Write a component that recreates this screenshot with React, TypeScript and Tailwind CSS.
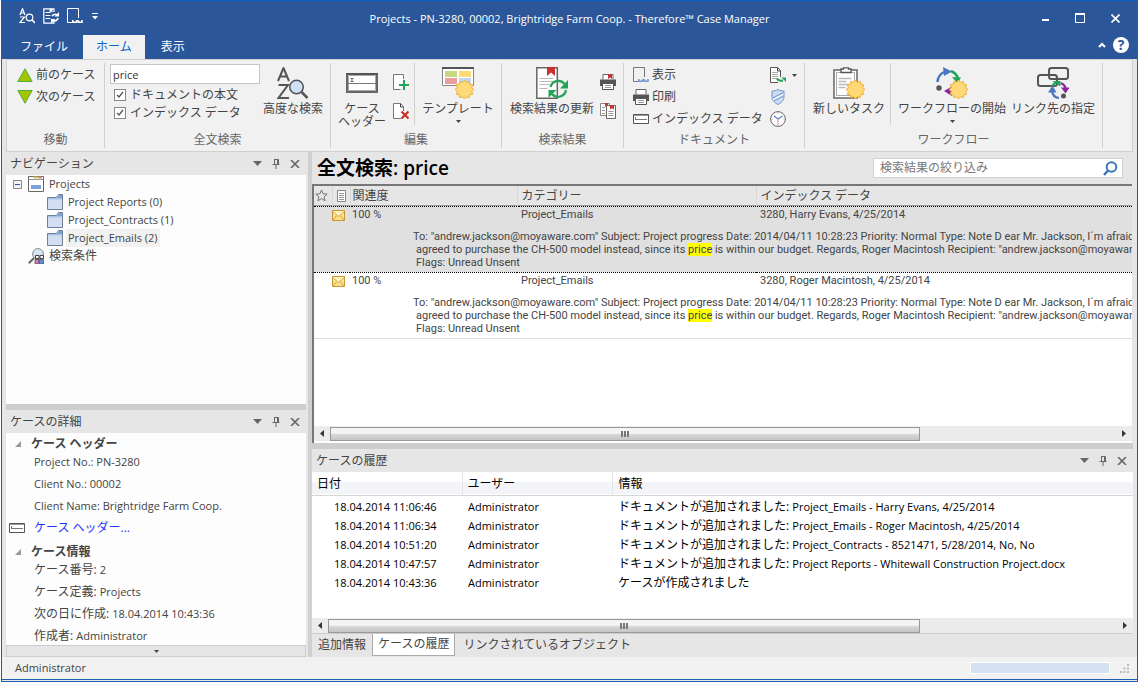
import type { ReactNode } from "react"

const treeItems = [
  { label: "Project Reports (0)", selected: false },
  { label: "Project_Contracts (1)", selected: false },
  { label: "Project_Emails (2)", selected: true },
]

const results = [
  { relevance: "100 %", category: "Project_Emails", index: "3280, Harry Evans, 4/25/2014", selected: true },
  { relevance: "100 %", category: "Project_Emails", index: "3280, Roger Macintosh, 4/25/2014", selected: false },
]

const history = [
  { date: "18.04.2014 11:06:46", user: "Administrator", info: "ドキュメントが追加されました: ", detail: "Project_Emails - Harry Evans, 4/25/2014" },
  { date: "18.04.2014 11:06:34", user: "Administrator", info: "ドキュメントが追加されました: ", detail: "Project_Emails - Roger Macintosh, 4/25/2014" },
  { date: "18.04.2014 10:51:20", user: "Administrator", info: "ドキュメントが追加されました: ", detail: "Project_Contracts - 8521471, 5/28/2014, No, No" },
  { date: "18.04.2014 10:47:57", user: "Administrator", info: "ドキュメントが追加されました: ", detail: "Project Reports - Whitewall Construction Project.docx" },
  { date: "18.04.2014 10:43:36", user: "Administrator", info: "ケースが作成されました", detail: "" },
]

const caseInfo = [
  { label: "ケース番号: ", value: "2" },
  { label: "ケース定義: ", value: "Projects" },
  { label: "次の日に作成: ", value: "18.04.2014 10:43:36" },
  { label: "作成者: ", value: "Administrator" },
]

const sunPoints = Array.from({ length: 24 }, (_, i) => {
  const r = i % 2 ? 7.4 : 9.4
  const a = (i * Math.PI) / 12
  return `${(Math.cos(a) * r).toFixed(2)},${(Math.sin(a) * r).toFixed(2)}`
}).join(" ")

function Sun({ x, y }: { x: number; y: number }) {
  return <polygon points={sunPoints} transform={`translate(${x} ${y})`} fill="#ffd978" stroke="#f0b030" strokeWidth="1" />
}

/* ---------- small icons ---------- */

function CaretDown({ className = "" }: { className?: string }) {
  return (
    <svg width="5" height="3" viewBox="0 0 5 3" className={className}>
      <path d="M0 0h5L2.5 3z" fill="#444" />
    </svg>
  )
}

function FindSmallIcon() {
  return (
    <svg width="16" height="16" viewBox="0 0 16 16" fill="none" stroke="#fff" strokeWidth="1.2">
      <path d="M1 7L3.500 .8L6 7M2 5h3M1 9h4.500L1 14.500h5" />
      <circle cx="10.500" cy="9.500" r="3.300" />
      <path d="M13 12l3 3" strokeWidth="1.600" />
    </svg>
  )
}

function RefreshSmallIcon() {
  return (
    <svg width="16" height="16" viewBox="0 0 16 16" fill="none" stroke="#fff" strokeWidth="1.200">
      <path d="M11 4V.8H.8v14.400H11V13" />
      <path d="M2.500 4.500h5M2.500 7.500h5M2.500 10.500h5" />
      <path d="M6.500 .8h3v4L8 3.600 6.500 4.800z" fill="#fff" stroke="none" />
      <path d="M9 8a3.500 3.500 0 0 1 5-1M15 10a3.500 3.500 0 0 1-5 2.500" strokeWidth="1.600" />
      <path d="M16 4v4.500h-4.500zM8 15.500V11h4.500z" fill="#fff" stroke="none" />
    </svg>
  )
}

function ViewDocIcon({ stroke = "#777", accent = "#7797cc" }: { stroke?: string; accent?: string }) {
  return (
    <svg width="16" height="16" viewBox="0 0 16 16" fill="none">
      <path d="M11.500 10V.5H.5v14H6" stroke={stroke} />
      <path d="M5.800 12v2.200h3.700V12.500M11.500 12.500v1.700H15V12M9.500 12.800h2" stroke={accent} strokeWidth="1.600" />
    </svg>
  )
}

function PrinterIcon({ mark = false }: { mark?: boolean }) {
  return (
    <svg width="16" height="16" viewBox="0 0 16 16">
      <path d="M3 5.500V.5h10v5" fill="#fff" stroke="#666" />
      <path d="M0 5.500h16V12H0z" fill="#555" />
      <path d="M2.500 9.500h11v6h-11z" fill="#fff" stroke="#555" />
      <path d="M5 11.500h6M5 13.500h6" stroke="#999" />
      {mark && <path d="M8 0h4v5l-2-1.500L8 5z" fill="#c83232" />}
    </svg>
  )
}

function HeaderFormIcon() {
  return (
    <svg width="16" height="10" viewBox="0 0 16 10">
      <path d="M.5.500h15v9H.5z" fill="#fff" stroke="#555" />
      <path d="M1 1.500h14" stroke="#999" />
      <path d="M2 5.500h12M2.500 3v2.500" stroke="#777" fill="none" />
    </svg>
  )
}

function AddDocIcon() {
  return (
    <svg width="16" height="16" viewBox="0 0 16 16" fill="none">
      <path d="M10.500 5V.5H.5v15h7" fill="#fff" stroke="#777" />
      <path d="M11 6v10M6 11h10" stroke="#22a35a" strokeWidth="2" />
    </svg>
  )
}

function RemoveDocIcon() {
  return (
    <svg width="16" height="16" viewBox="0 0 16 16" fill="none">
      <path d="M8 15.500H.5V.5h7l3 3V8" fill="#fff" stroke="#777" />
      <path d="M7.500.500v3.500h3" stroke="#444" />
      <path d="M8.500 8.500l7 7M15.500 8.500l-7 7" stroke="#c8322a" strokeWidth="2.200" />
    </svg>
  )
}

function CopyDocsIcon() {
  return (
    <svg width="16" height="16" viewBox="0 0 16 16" fill="none">
      <path d="M.5.500h9v12h-9z" fill="#fff" stroke="#888" />
      <path d="M2 4.500h3M2 7.500h3M2 10.500h3" stroke="#999" />
      <path d="M5 0h3v4L6.500 3 5 4z" fill="#c83232" />
      <path d="M6.500 2.500h9v13h-9z" fill="#fff" stroke="#666" />
      <path d="M8.500 8.500h5M8.500 10.500h5M8.500 12.500h5" stroke="#999" />
      <path d="M10 2h4v4.500l-2-1.200-2 1.200z" fill="#c83232" />
    </svg>
  )
}

function SendDocIcon() {
  return (
    <svg width="16" height="16" viewBox="0 0 16 16" fill="none">
      <path d="M8 15.500H.5V.5h7l3 3V10" fill="#fff" stroke="#555" />
      <path d="M7.500.500v3.500h3" stroke="#444" />
      <path d="M2 5.500h6M2 7.500h6M2 9.500h6M2 11.500h5" stroke="#aaa" />
      <path d="M7 11.500c1 2 3 2.500 6 2" stroke="#22a35a" strokeWidth="2" />
      <path d="M11.500 10.500H16V15z" fill="#22a35a" />
    </svg>
  )
}

function ShieldIcon() {
  return (
    <svg width="16" height="16" viewBox="0 0 16 16" fill="none">
      <path d="M2 2c2 0 4-.5 6-1.500C10 1.500 12 2 14 2v6c0 3.500-3 6-6 7.500C5 14 2 11.500 2 8z" fill="#c9dcf2" stroke="#7797cc" />
      <path d="M2.500 9L13.500 3.500M4 12L13.500 7" stroke="#7797cc" />
      <path d="M3 10.600L13.500 5.200" stroke="#fff" />
    </svg>
  )
}

function ClockIcon() {
  return (
    <svg width="16" height="16" viewBox="0 0 16 16" fill="none">
      <circle cx="8" cy="8" r="7.400" fill="#fff" stroke="#666" />
      <path d="M4 5l4 3 4.500-3" stroke="#5b84c4" strokeWidth="1.300" />
      <path d="M8 8v5.500" stroke="#e08a8a" />
      <path d="M8 1.500v1M8 13.500v1M1.500 8h1M13.500 8h1" stroke="#999" />
    </svg>
  )
}

function FolderIcon() {
  return (
    <svg width="16" height="16" viewBox="0 0 16 16">
      <path d="M.5 3.500h9L11.500.5h4v15H.5z" fill="#d3dff0" stroke="#6e7f99" />
      <path d="M10 4L12 1h3v3z" fill="#7aa3d8" />
      <path d="M1 4h14v1.500H1z" fill="#a9c4e6" />
    </svg>
  )
}

function CaseIcon() {
  return (
    <svg width="16" height="16" viewBox="0 0 16 16">
      <path d="M.5.500h15v15H.5z" fill="#fff" stroke="#666" />
      <path d="M1 3.500h14" stroke="#999" />
      <path d="M5 .5h5l1 2H6z" fill="#cfc860" />
      <path d="M10 .5h4v2h-3z" fill="#e08a78" />
      <path d="M3 9h10v4H3z" fill="#7aa3d8" />
    </svg>
  )
}

function SearchConditionIcon() {
  return (
    <svg width="16" height="16" viewBox="0 0 16 16">
      <circle cx="10" cy="6" r="5.400" fill="#d6e4f5" stroke="#888" />
      <path d="M6 10L.8 15.200" stroke="#666" strokeWidth="2" />
      <path d="M7.500 7.500h3.500v3H7.500zM12 7.500h3.500v3H12z" fill="#fff" stroke="#444" />
      <path d="M7 11.500h4V16H7z" fill="#c87ac0" stroke="#555" strokeWidth=".8" />
      <path d="M11.500 11.500h4V16h-4z" fill="#5b8fd8" stroke="#555" strokeWidth=".8" />
    </svg>
  )
}

function MailIcon() {
  return (
    <svg width="13" height="11" viewBox="0 0 13 11">
      <path d="M.5.500h12v10H.5z" fill="#fbe08a" stroke="#c89632" />
      <path d="M1 1h11v3L6.500 6.500 1 4z" fill="#fff2b8" />
      <path d="M1 2l5.500 4.500L12 2M1 10l3.500-4M12 10L8.500 6" fill="none" stroke="#d0a040" />
    </svg>
  )
}

/* ---------- large ribbon icons ---------- */

function AdvancedSearchIcon() {
  return (
    <svg width="32" height="32" viewBox="0 0 32 32" fill="none" stroke="#555" strokeWidth="2">
      <path d="M1 14L6.500 1L12 14M3 9.500h7" />
      <path d="M1.500 18h9.500L1.500 31H12" />
      <circle cx="19.500" cy="20" r="6.800" fill="#cfe0f5" strokeWidth="1.500" />
      <path d="M24.500 25l6 6" strokeWidth="2.500" />
    </svg>
  )
}

function CaseHeaderIcon() {
  return (
    <svg width="32" height="32" viewBox="0 0 32 32" fill="none">
      <path d="M1 7h30v18H1z" fill="#fff" stroke="#666" strokeWidth="2" />
      <path d="M0 7h32" stroke="#555" strokeWidth="2" />
      <path d="M2.500 8.500h27v15h-27z" stroke="#aaa" />
      <path d="M2 16.500h28" stroke="#777" />
      <path d="M4.500 11.500h3M4.500 14.500h3M6 11.500v3" stroke="#666" />
    </svg>
  )
}

function TemplateIcon() {
  return (
    <svg width="32" height="32" viewBox="0 0 32 32">
      <path d="M.5.500h31v18H.5z" fill="#fff" stroke="#888" />
      <path d="M0 0h32v2H0z" fill="#555" />
      <path d="M3 4h12v6H3z" fill="#c8d880" />
      <path d="M17 4h12v6H17z" fill="#ffd978" />
      <path d="M3 11h12v6H3z" fill="#eb9c9c" />
      <path d="M17 11h12v6H17z" fill="#c3d6ef" />
      <Sun x={22.5} y={22.5} />
    </svg>
  )
}

function RefreshResultsIcon() {
  return (
    <svg width="32" height="32" viewBox="0 0 32 32" fill="none">
      <path d="M.8.800h20.500v30.500H.8z" fill="#fff" stroke="#666" strokeWidth="1.500" />
      <path d="M3.500 11.500h14M3.500 14.500h14M3.500 17.500h10M3.500 21.500h8" stroke="#bbb" />
      <path d="M11 0h8v9l-4-3.500L11 9z" fill="#c8322a" />
      <path d="M14.500 20a8 8 0 0 1 14-3M30 23a8 8 0 0 1-14 4" stroke="#22a35a" strokeWidth="2.200" />
      <path d="M32 13v8.500h-8zM12.500 31v-8h8z" fill="#22a35a" />
    </svg>
  )
}

function NewTaskIcon() {
  return (
    <svg width="32" height="32" viewBox="0 0 32 32" fill="none">
      <path d="M1 3h23v28H1z" fill="#fff" stroke="#666" strokeWidth="1.500" />
      <path d="M3.500 5.500h18v23h-18z" stroke="#aaa" />
      <path d="M8 5.500V2h2.500V.8h5V2H18v3.500z" fill="#fff" stroke="#555" strokeWidth="1.300" />
      <path d="M5.500 11.500h13M5.500 14.500h8M5.500 17.500h11M5.500 20.500h7" stroke="#bbb" strokeWidth="1.300" />
      <Sun x={22.5} y={22.5} />
    </svg>
  )
}

function StartWorkflowIcon() {
  return (
    <svg width="32" height="32" viewBox="0 0 32 32" fill="none">
      <path d="M1.500 15A12 12 0 0 1 8 5" stroke="#4a78c0" strokeWidth="2.500" />
      <path d="M7 0l9 4.500L8 9z" fill="#4a78c0" />
      <path d="M15 4a11 11 0 0 1 7 8" stroke="#22a35a" strokeWidth="2.500" />
      <path d="M16 10l9 .5-3.500 6z" fill="#22a35a" />
      <circle cx="3" cy="21" r="2.700" fill="#555" />
      <path d="M8 24l8-4.500V29z" fill="#8a22a0" />
      <Sun x={22.5} y={22.5} />
    </svg>
  )
}

function LinkTargetIcon() {
  return (
    <svg width="32" height="32" viewBox="0 0 32 32" fill="none">
      <rect x="1" y="8" width="19" height="11" rx="2.500" stroke="#555" strokeWidth="2" />
      <rect x="12" y="1" width="19" height="11" rx="2.500" stroke="#555" strokeWidth="2" />
      <path d="M15 20c1-3 3-4.500 5.500-5" stroke="#22a35a" strokeWidth="2.200" />
      <path d="M15.500 14h8v5.500z" fill="#22a35a" />
      <path d="M24 16c3 1.500 4.500 3.500 4.500 6" stroke="#8a22a0" strokeWidth="2.200" />
      <path d="M24 20.500h8.500l-4 6z" fill="#8a22a0" />
      <path d="M15 24c.5 4 3 6.500 7 7" stroke="#4a78c0" strokeWidth="2.200" />
      <path d="M15.500 18.500l-4.500 7h8.500z" fill="#4a78c0" />
      <circle cx="26.500" cy="29" r="2.500" fill="#555" />
    </svg>
  )
}

/* ---------- building blocks ---------- */

function RibbonGroup({ label, className, children }: { label: string; className: string; children: ReactNode }) {
  return (
    <section className={`flex shrink-0 flex-col border-r border-[#d0d0d0] ${className}`}>
      <div className="flex flex-1 items-start">{children}</div>
      <div className="text-center leading-4 text-[#666]">{label}</div>
    </section>
  )
}

function BigButton({ icon, caret = false, className = "", children }: { icon: ReactNode; caret?: boolean; className?: string; children: ReactNode }) {
  return (
    <button className={`flex shrink-0 flex-col items-center whitespace-nowrap pt-1 leading-[13px] ${className}`}>
      {icon}
      <span className="mt-[3px]">{children}</span>
      {caret && <CaretDown className="mt-[5px]" />}
    </button>
  )
}

function PanelHeader({ title }: { title: string }) {
  return (
    <header className="flex h-[23px] shrink-0 items-center bg-[#e6e6e6] pl-1 pr-[6px]">
      <h2 className="flex-1 leading-4">{title}</h2>
      <div className="flex items-center gap-[9px]">
        <button aria-label="メニュー">
          <svg width="9" height="5" viewBox="0 0 9 5"><path d="M0 0h9L4.500 5z" fill="#666" /></svg>
        </button>
        <button aria-label="固定">
          <svg width="10" height="10" viewBox="0 0 10 10" fill="none" stroke="#666">
            <path d="M3 .5h4.500v5M3.500 .5v5M1.500 5.500h7M5 6v4M6.500 1v5" />
          </svg>
        </button>
        <button aria-label="閉じる">
          <svg width="10" height="8" viewBox="0 0 10 8" fill="none" stroke="#666" strokeWidth="1.600"><path d="M1 0l8 8M9 0L1 8" /></svg>
        </button>
      </div>
    </header>
  )
}

function ScrollBar() {
  return (
    <div className="flex h-[15px] shrink-0 items-center bg-[#ececec]">
      <button aria-label="左へ" className="flex w-4 justify-center">
        <svg width="4" height="7" viewBox="0 0 4 7"><path d="M4 0v7L0 3.500z" fill="#333" /></svg>
      </button>
      <div className="flex-1">
        <div className="flex h-[14px] w-3/4 items-center justify-center gap-px border border-[#999] bg-linear-to-b from-[#f4f4f4] from-45% via-[#d9d9d9] via-50% to-[#c4c4c8]">
          <i className="h-[6px] w-[2px] bg-[#777]" />
          <i className="h-[6px] w-[2px] bg-[#777]" />
          <i className="h-[6px] w-[2px] bg-[#777]" />
        </div>
      </div>
      <button aria-label="右へ" className="flex w-4 justify-center">
        <svg width="4" height="7" viewBox="0 0 4 7"><path d="M0 0v7l4-3.500z" fill="#333" /></svg>
      </button>
    </div>
  )
}

function CheckBox({ label }: { label: string }) {
  return (
    <label className="flex h-[18px] items-center gap-1">
      <span className="grid">
        <input type="checkbox" defaultChecked className="col-start-1 row-start-1 h-3 w-3 appearance-none border border-[#888] bg-white" />
        <svg width="12" height="12" viewBox="0 0 12 12" className="pointer-events-none col-start-1 row-start-1">
          <path d="M3 6l2 2 4-5" fill="none" stroke="#555" strokeWidth="1.300" />
        </svg>
      </span>
      {label}
    </label>
  )
}

function SectionTitle({ children }: { children: ReactNode }) {
  return (
    <h3 className="flex items-center gap-[10px] pl-[9px] font-bold">
      <svg width="6" height="6" viewBox="0 0 6 6"><path d="M6 0v6H0z" fill="#999" /></svg>
      {children}
    </h3>
  )
}

/* ---------- page parts ---------- */

function TitleBar() {
  return (
    <div className="border-t border-[#0a64c8] bg-[#2b579a] text-white">
      <div className="grid h-[34px] grid-cols-[1fr_auto_1fr] items-center">
        <div className="flex items-center gap-2 pb-1 pl-[17px]">
          <button aria-label="検索"><FindSmallIcon /></button>
          <button aria-label="更新"><RefreshSmallIcon /></button>
          <button aria-label="表示"><ViewDocIcon stroke="#fff" accent="#fff" /></button>
          <button aria-label="カスタマイズ" className="pl-px">
            <svg width="6" height="7" viewBox="0 0 6 7"><path d="M0 0h6v1H0zM0 3h6L3 6.500z" fill="#fff" /></svg>
          </button>
        </div>
        <h1 className="pt-[2px] text-[11px]">Projects - PN-3280, 00002, Brightridge Farm Coop. - Therefore™ Case Manager</h1>
        <div className="flex items-center justify-end gap-[26px] pr-[17px]">
          <button aria-label="最小化"><svg width="7" height="10" viewBox="0 0 7 10"><path d="M0 6h7v2H0z" fill="#fff" /></svg></button>
          <button aria-label="最大化"><svg width="10" height="10" viewBox="0 0 10 10"><path d="M.5 1h9v8.500h-9z" fill="none" stroke="#fff" /><path d="M0 0h10v2H0z" fill="#fff" /></svg></button>
          <button aria-label="閉じる"><svg width="9" height="9" viewBox="0 0 9 9"><path d="M.5.500l8 8M8.500.500l-8 8" stroke="#fff" strokeWidth="1.600" /></svg></button>
        </div>
      </div>
      <nav className="flex h-6 items-stretch">
        <button className="pl-[18px] pr-[15px]">ファイル</button>
        <button className="bg-[#f1f1f1] px-[13px] text-[#0a64c8]">ホーム</button>
        <button className="px-4">表示</button>
        <div className="ml-auto flex items-center gap-[7px] pb-1 pr-2">
          <button aria-label="リボンを折りたたむ">
            <svg width="8" height="6" viewBox="0 0 8 6"><path d="M1 5l3-3 3 3" fill="none" stroke="#fff" strokeWidth="2" /></svg>
          </button>
          <button className="h-4 w-4 rounded-full bg-white text-[14px] font-bold leading-4 text-[#2b579a]">?</button>
        </div>
      </nav>
    </div>
  )
}

function Ribbon() {
  return (
    <div className="mx-1 flex h-[93px] overflow-hidden border border-[#d0d0d0] bg-[#f1f1f1] pb-[3px] pt-[3px]">
      <RibbonGroup label="移動" className="w-[98px]">
        <div className="flex flex-col items-start gap-[2px] whitespace-nowrap pl-[10px] pt-[2px]">
          <button className="flex h-5 items-center gap-[3px]">
            <svg width="16" height="14" viewBox="0 0 16 14"><path d="M8 .8L15.200 13.500H.8z" fill="#a4c400" stroke="#4eae3e" /></svg>
            前のケース
          </button>
          <button className="flex h-5 items-center gap-[3px]">
            <svg width="16" height="14" viewBox="0 0 16 14"><path d="M8 13.200L.8.500h14.400z" fill="#a4c400" stroke="#4eae3e" /></svg>
            次のケース
          </button>
        </div>
      </RibbonGroup>

      <RibbonGroup label="全文検索" className="w-[226px]">
        <div className="flex-1 whitespace-nowrap pl-[5px] pt-px">
          <input aria-label="検索語" defaultValue="price" className="block h-5 w-[150px] border border-[#c6c6c6] bg-white pl-[2px] text-[11px] text-[#333] outline-none" />
          <div className="pl-1 pt-[2px]">
            <CheckBox label="ドキュメントの本文" />
            <CheckBox label="インデックス データ" />
          </div>
        </div>
        <BigButton icon={<AdvancedSearchIcon />} className="pr-[7px]">高度な検索</BigButton>
      </RibbonGroup>

      <RibbonGroup label="編集" className="w-[171px]">
        <BigButton icon={<CaseHeaderIcon />} className="w-[62px]">ケース<br />ヘッダー</BigButton>
        <div className="flex h-[62px] flex-col gap-[13px] border-r border-[#d0d0d0] pr-[5px] pt-[11px]">
          <button aria-label="ケースに追加"><AddDocIcon /></button>
          <button aria-label="ケースから削除"><RemoveDocIcon /></button>
        </div>
        <BigButton icon={<TemplateIcon />} caret className="flex-1">テンプレート</BigButton>
      </RibbonGroup>

      <RibbonGroup label="検索結果" className="w-[122px]">
        <BigButton icon={<RefreshResultsIcon />} className="pl-2">検索結果の更新</BigButton>
        <div className="flex flex-col gap-[13px] pl-[6px] pt-[11px]">
          <button aria-label="結果を印刷"><PrinterIcon mark /></button>
          <button aria-label="結果をコピー"><CopyDocsIcon /></button>
        </div>
      </RibbonGroup>

      <RibbonGroup label="ドキュメント" className="w-[181px]">
        <div className="flex flex-1 flex-col items-start gap-[2px] whitespace-nowrap pl-[9px] pt-[2px]">
          <button className="flex h-5 items-center gap-[3px]"><ViewDocIcon />表示</button>
          <button className="flex h-5 items-center gap-[3px]"><PrinterIcon />印刷</button>
          <button className="flex h-5 items-center gap-[3px]"><HeaderFormIcon />インデックス データ</button>
        </div>
        <div className="flex flex-col gap-[6px] pr-[7px] pt-1">
          <button aria-label="送信" className="flex items-center gap-[6px]"><SendDocIcon /><CaretDown /></button>
          <button aria-label="セキュリティ"><ShieldIcon /></button>
          <button aria-label="履歴"><ClockIcon /></button>
        </div>
      </RibbonGroup>

      <RibbonGroup label="ワークフロー" className="w-[298px]">
        <div className="flex h-[62px] border-r border-[#d0d0d0] pl-2 pr-[5px]">
          <BigButton icon={<NewTaskIcon />}>新しいタスク</BigButton>
        </div>
        <BigButton icon={<StartWorkflowIcon />} caret className="pl-[7px]">ワークフローの開始</BigButton>
        <BigButton icon={<LinkTargetIcon />} className="pl-[5px]">リンク先の指定</BigButton>
      </RibbonGroup>
    </div>
  )
}

function Sidebar() {
  return (
    <aside className="flex w-[300px] shrink-0 flex-col">
      <PanelHeader title="ナビゲーション" />
      <div className="flex-1 bg-[#fdfdfd] text-[11px]">
        <div className="flex h-[18px] items-center pl-[7px]">
          <button aria-label="折りたたむ" className="mr-[6px]">
            <svg width="9" height="9" viewBox="0 0 9 9"><path d="M.5.500h8v8h-8z" fill="#f4f4f4" stroke="#888" /><path d="M2 4.500h5" stroke="#3050a0" /></svg>
          </button>
          <CaseIcon />
          <span className="pl-[5px]">Projects</span>
        </div>
        {treeItems.map((item) => (
          <div key={item.label} className="flex h-[18px] items-center gap-[3px] pl-[41px]">
            <FolderIcon />
            <span className={item.selected ? "bg-[#f1f1f1] px-[2px] leading-[18px]" : "px-[2px]"}>{item.label}</span>
          </div>
        ))}
        <div className="flex h-[18px] items-center gap-[5px] pl-[22px] text-[12px]">
          <SearchConditionIcon />
          検索条件
        </div>
      </div>
      <div className="h-[6px] bg-[#cdcdcd]" />
      <PanelHeader title="ケースの詳細" />
      <div className="flex flex-col gap-[6px] bg-[#fdfdfd] pb-px pt-[3px] leading-4">
        <SectionTitle>ケース ヘッダー</SectionTitle>
        <p className="-mt-1 pl-7 text-[11px]">Project No.: PN-3280</p>
        <p className="pl-7 text-[11px]">Client No.: 00002</p>
        <p className="pl-7 text-[11px]">Client Name: Brightridge Farm Coop.</p>
        <a href="#header" className="flex items-center gap-[9px] pl-[3px] text-[#1e32ff]">
          <HeaderFormIcon />
          ケース ヘッダー...
        </a>
        <div className="mt-[2px]"><SectionTitle>ケース情報</SectionTitle></div>
        <ul className="-mt-1 flex flex-col gap-[6px] pl-7">
          {caseInfo.map((row) => (
            <li key={row.label} className="h-4">{row.label}<span className="text-[11px]">{row.value}</span></li>
          ))}
        </ul>
      </div>
      <button aria-label="さらに表示" className="flex h-3 items-center justify-center border border-[#cdcdcd] bg-[#e6e6e6]">
        <CaretDown />
      </button>
    </aside>
  )
}

function Snippet() {
  return (
    <div className="overflow-hidden whitespace-nowrap pl-[102px] leading-[13px]">
      <p className="-ml-[3px]">To: "andrew.jackson@moyaware.com" Subject: Project progress Date: 2014/04/11 10:28:23 Priority: Normal Type: Note D ear Mr. Jackson, I´m afraid th</p>
      <p>agreed to purchase the CH-500 model instead, since its <mark className="bg-[#ffff00] text-inherit">price</mark> is within our budget. Regards, Roger Macintosh Recipient: "andrew.jackson@moyaware.c</p>
      <p>Flags: Unread Unsent</p>
    </div>
  )
}

function Results() {
  return (
    <section className="flex flex-1 flex-col">
      <div className="flex h-8 items-center justify-between pl-[5px] pr-[10px]">
        <h2 className="text-[19px] font-semibold leading-6 text-black">全文検索: price</h2>
        <div className="flex h-5 w-[250px] items-center border border-[#d0d0d0] bg-white pr-1">
          <input aria-label="検索結果の絞り込み" placeholder="検索結果の絞り込み" className="min-w-0 flex-1 pl-[6px] outline-none placeholder:text-[#777]" />
          <svg width="15" height="15" viewBox="0 0 15 15" fill="none" stroke="#3c78b4" strokeWidth="2">
            <circle cx="8.500" cy="6" r="4.800" />
            <path d="M5 9.500L1 14" strokeWidth="2.500" />
          </svg>
        </div>
      </div>
      <div className="mr-px flex flex-1 flex-col border-l-2 border-t-2 border-[#777] bg-white">
        <table className="w-full table-fixed border-collapse font-['Roboto','Noto_Sans_CJK_JP',sans-serif] text-[11px]">
          <colgroup>
            <col className="w-[18px]" />
            <col className="w-[18px]" />
            <col className="w-[167px]" />
            <col className="w-[239px]" />
            <col />
          </colgroup>
          <thead className="bg-[#e6e6e6] shadow-[inset_0_-1px_#999]">
            <tr className="h-5 text-left text-[12px] leading-4">
              <th className="border-r border-[#d8d8d8] pl-px">
                <svg width="13" height="13" viewBox="0 0 13 13"><path d="M6.500 1l1.600 3.800 4.100.3-3.100 2.700 1 4-3.600-2.200-3.600 2.200 1-4L.8 5.100l4.100-.3z" fill="none" stroke="#777" /></svg>
              </th>
              <th className="border-r border-[#d8d8d8] pl-1">
                <svg width="9" height="12" viewBox="0 0 9 12"><path d="M.5.500h8v11h-8z" fill="#fff" stroke="#888" /><path d="M2 3.500h5M2 5.500h5M2 7.500h5M2 9.500h5" stroke="#999" /></svg>
              </th>
              <th className="border-r border-[#d8d8d8] pl-[2px] font-normal">関連度</th>
              <th className="border-r border-[#d8d8d8] pl-1 font-normal">カテゴリー</th>
              <th className="pl-1 font-normal">インデックス データ</th>
            </tr>
          </thead>
          {results.map((row) => (
            <tbody
              key={row.index}
              className={row.selected ? "border-y border-dotted border-black bg-[#e0e0e0]" : "border-b border-[#ddd]"}
            >
              <tr className="h-[18px] leading-4">
                <td />
                <td><MailIcon /></td>
                <td className="pl-[2px]">{row.relevance}</td>
                <td className="pl-1">{row.category}</td>
                <td className="pl-1">{row.index}</td>
              </tr>
              <tr className="h-12">
                <td colSpan={5} className="p-0 pt-[6px] align-top"><Snippet /></td>
              </tr>
            </tbody>
          ))}
        </table>
        <div className="mt-auto pb-[2px]"><ScrollBar /></div>
      </div>
    </section>
  )
}

function History() {
  return (
    <section>
      <PanelHeader title="ケースの履歴" />
      <div className="bg-white pb-[26px] text-black">
        <table className="w-full table-fixed border-collapse whitespace-nowrap">
          <colgroup>
            <col className="w-[150px]" />
            <col className="w-[150px]" />
            <col />
          </colgroup>
          <thead>
            <tr className="h-[23px] border-b border-[#d5d5d5] bg-linear-to-b from-white from-40% to-[#f2f4f7] to-50% text-left leading-4">
              <th className="border-r border-[#e2e4e8] pl-[5px] pt-[2px] font-normal">日付</th>
              <th className="border-r border-[#e2e4e8] pl-[5px] pt-[2px] font-normal">ユーザー</th>
              <th className="pl-[6px] pt-[2px] font-normal">情報</th>
            </tr>
          </thead>
          <tbody>
            <tr className="h-[2px]"><td colSpan={3} /></tr>
            {history.map((row) => (
              <tr key={row.date} className="h-[19px] text-[11px] leading-4">
                <td className="pl-[22px]">{row.date}</td>
                <td className="pl-[6px]">{row.user}</td>
                <td className="pl-[6px]"><span className="text-[12px]">{row.info}</span>{row.detail}</td>
              </tr>
            ))}
          </tbody>
        </table>
      </div>
      <ScrollBar />
      <div className="flex h-6 items-start border-t border-[#cdcdcd] leading-4">
        <button className="px-[6px] pt-[3px]">追加情報</button>
        <button className="border border-t-0 border-[#aaa] bg-white px-[5px] pb-[3px] pt-[2px]">ケースの履歴</button>
        <button className="px-2 pt-[3px]">リンクされているオブジェクト</button>
      </div>
    </section>
  )
}

export default function App() {
  return (
    <div className="flex min-h-screen flex-col bg-white px-px pb-px font-['Open_Sans','Noto_Sans_CJK_JP',sans-serif] text-[12px] text-[#444]">
      <div className="flex flex-1 flex-col border-x border-b-3 border-double border-[#1e5fb4] bg-[#e6e6e6]">
        <TitleBar />
        <Ribbon />
        <main className="mx-1 flex flex-1">
          <Sidebar />
          <div className="ml-[2px] w-1 shrink-0 bg-[#d0d0d0]" />
          <div className="flex min-w-0 flex-1 flex-col">
            <Results />
            <div className="h-[6px] bg-[#cdcdcd]" />
            <History />
          </div>
        </main>
        <footer className="flex h-[22px] items-center bg-[#f1f1f1] pl-[13px] pr-2 text-[11px]">
          <span className="flex-1">Administrator</span>
          <div className="h-3 w-[140px] border border-white bg-[#d6e2f2]" />
          <svg width="9" height="9" viewBox="0 0 9 9" className="ml-[10px]" fill="#bbb">
            <path d="M7 0h2v2H7zM7 3.500h2v2H7zM7 7h2v2H7zM3.500 3.500h2v2h-2zM3.500 7h2v2h-2zM0 7h2v2H0z" />
          </svg>
        </footer>
      </div>
    </div>
  )
}
